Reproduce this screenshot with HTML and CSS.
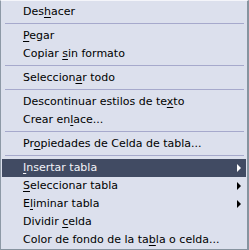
FILE: index.html
```html
<!DOCTYPE html>
<html>
<head>
    <meta charset="UTF-8">
    <title>Menú contextual</title>
    <link rel="stylesheet" href="styles.css">
</head>
<body>
    <div class="menu">
        <div class="item">Des<u>h</u>acer</div>
        <div class="sep"></div>
        <div class="item"><u>P</u>egar</div>
        <div class="item">Copiar <u>s</u>in formato</div>
        <div class="sep"></div>
        <div class="item">Seleccion<u>a</u>r todo</div>
        <div class="sep"></div>
        <div class="item">Descontinuar estilos de te<u>x</u>to</div>
        <div class="item">Crear en<u>l</u>ace...</div>
        <div class="sep"></div>
        <div class="item">Pr<u>o</u>piedades de Celda de tabla...</div>
        <div class="sep"></div>
        <div class="item sub active"><span><u>I</u>nsertar tabla</span></div>
        <div class="item sub"><span><u>S</u>eleccionar tabla</span></div>
        <div class="item sub"><span>E<u>l</u>iminar tabla</span></div>
        <div class="item">Dividir <u>c</u>elda</div>
        <div class="item">Color de fondo de la ta<u>b</u>la o celda...</div>
    </div>
</body>
</html>
```

FILE: styles.css
```css
body {
    margin: 0;
    padding: 0;
    font-family: "DejaVu Sans", sans-serif;
    font-size: 11px;
}

.menu {
    box-sizing: border-box;
    width: 249px;
    height: 250px;
    overflow: hidden;
    padding: 2px 1px 0 1px;
    background-color: #dce0ed;
    border-top: 1px solid #f4f5fa;
    border-left: 1px solid #8d99a6;
    border-right: 2px solid #86939f;
    border-bottom: 1px solid #86939f;
    color: #000;
}

.item {
    height: 18px;
    line-height: 18px;
    padding-left: 21px;
    padding-right: 5px;
    white-space: nowrap;
}

.item u {
    text-decoration-thickness: 1px;
    text-underline-offset: 2px;
}

.sub {
    display: flex;
    align-items: center;
    justify-content: space-between;
}

.sub::after {
    content: "";
    width: 0;
    height: 0;
    border-left: 4px solid #000;
    border-top: 4px solid transparent;
    border-bottom: 4px solid transparent;
}

.active {
    background-color: #414b63;
    color: #f2f3f8;
}

.active::after {
    border-left-color: #fff;
}

.sep {
    height: 1px;
    margin: 2px 2px 3px 3px;
    background-color: #a6a9cc;
}
```
